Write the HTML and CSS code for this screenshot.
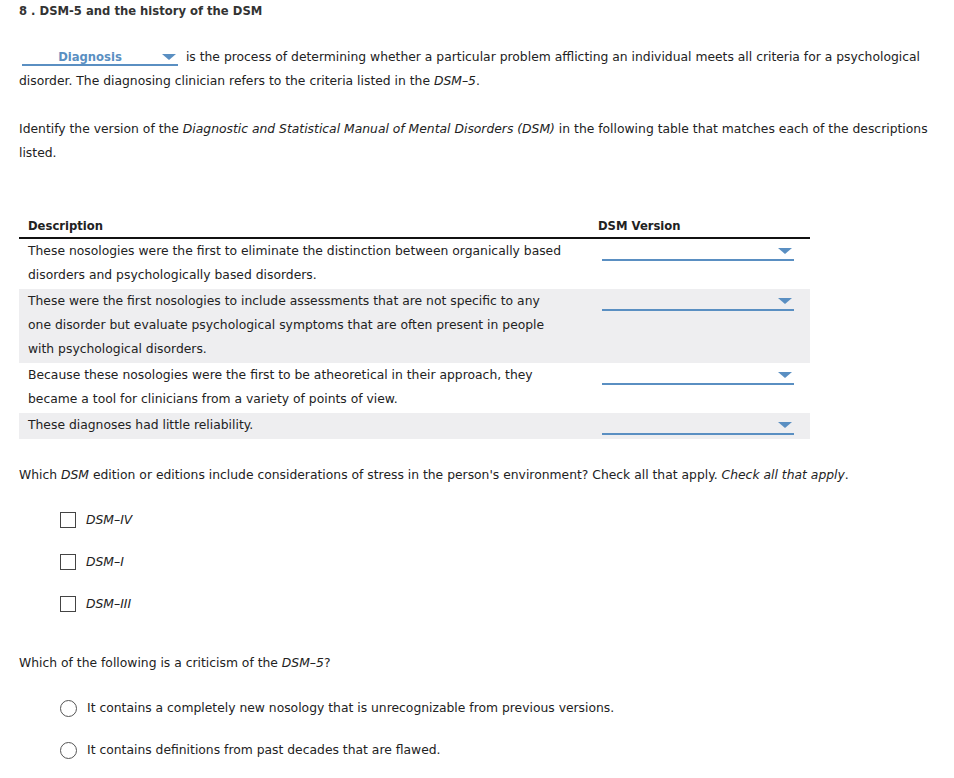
FILE: index.html
```html
<!DOCTYPE html>
<html lang="en">
<head>
  <meta charset="UTF-8">
  <title>DSM-5 and the history of the DSM</title>
  <link rel="stylesheet" href="styles.css">
</head>
<body>
  <div class="q-container">

    <h2 class="q-title">8 . DSM-5 and the history of the DSM</h2>

    <p class="q-text q-first">
      <span class="q-drop q-drop-inline"><span class="q-drop-value">Diagnosis</span><span class="q-caret"></span></span>
      is the process of determining whether a particular problem afflicting an individual meets all criteria for a psychological
      disorder. The diagnosing clinician refers to the criteria listed in the <i>DSM–5</i>.
    </p>

    <p class="q-text q-second">
      Identify the version of the <i>Diagnostic and Statistical Manual of Mental Disorders (DSM)</i> in the following table that matches each of the descriptions listed.
    </p>

    <table class="q-table">
      <thead>
        <tr>
          <th class="q-col-desc">Description</th>
          <th class="q-col-ver">DSM Version</th>
        </tr>
      </thead>
      <tbody>
        <tr>
          <td>These nosologies were the first to eliminate the distinction between organically based disorders and psychologically based disorders.</td>
          <td><span class="q-drop q-drop-cell"><span class="q-caret"></span></span></td>
        </tr>
        <tr class="q-alt">
          <td>These were the first nosologies to include assessments that are not specific to any one disorder but evaluate psychological symptoms that are often present in people with psychological disorders.</td>
          <td><span class="q-drop q-drop-cell"><span class="q-caret"></span></span></td>
        </tr>
        <tr>
          <td>Because these nosologies were the first to be atheoretical in their approach, they became a tool for clinicians from a variety of points of view.</td>
          <td><span class="q-drop q-drop-cell"><span class="q-caret"></span></span></td>
        </tr>
        <tr class="q-alt">
          <td>These diagnoses had little reliability.</td>
          <td><span class="q-drop q-drop-cell"><span class="q-caret"></span></span></td>
        </tr>
      </tbody>
    </table>

    <p class="q-text q-third">
      Which <i>DSM</i> edition or editions include considerations of stress in the person's environment? Check all that apply. <i>Check all that apply</i>.
    </p>

    <ul class="q-choices q-checks">
      <li><span class="q-box"></span><i>DSM–IV</i></li>
      <li><span class="q-box"></span><i>DSM–I</i></li>
      <li><span class="q-box"></span><i>DSM–III</i></li>
    </ul>

    <p class="q-text q-fourth">Which of the following is a criticism of the <i>DSM–5</i>?</p>

    <ul class="q-choices q-radios">
      <li><span class="q-radio"></span>It contains a completely new nosology that is unrecognizable from previous versions.</li>
      <li><span class="q-radio"></span>It contains definitions from past decades that are flawed.</li>
    </ul>

  </div>
</body>
</html>
```

FILE: styles.css
```css
body {
  margin: 0;
  color: #222;
  background: #fff;
  font-family: "DejaVu Sans", Verdana, sans-serif;
  font-size: 12.35px;
}

.q-container {
  width: 916px;
  padding: 3px 0 0 19px;
}

.q-title {
  margin: 0;
  font-size: 11.6px;
  line-height: 16px;
  font-weight: bold;
  color: #333;
}

.q-text {
  margin: 0;
  line-height: 24px;
}

.q-first {
  margin-top: 26px;
}

.q-second {
  margin-top: 24px;
}

.q-third {
  margin-top: 24px;
}

.q-fourth {
  margin-top: 38px;
}

/* dropdown selects, drawn as an underline with a caret */
.q-drop {
  position: relative;
  display: inline-block;
  box-sizing: border-box;
  border-bottom: 2px solid #5a8fc2;
  vertical-align: top;
}

.q-drop-inline {
  width: 156px;
  height: 21px;
  margin-left: 3px;
  margin-right: 4px;
  padding-right: 20px;
  text-align: center;
}

.q-drop-value {
  color: #5a8fc2;
  font-size: 11.6px;
  font-weight: bold;
  line-height: 22px;
}

.q-drop-inline .q-caret {
  top: 9px;
}

.q-drop-cell {
  width: 192px;
  height: 22px;
  margin-left: 30px;
}

.q-caret {
  position: absolute;
  right: 2px;
  top: 9px;
  width: 0;
  height: 0;
  border-left: 7px solid transparent;
  border-right: 7px solid transparent;
  border-top: 6px solid #5a8fc2;
}

/* description table */
.q-table {
  margin-top: 48px;
  width: 791px;
  border-collapse: collapse;
}

.q-table th {
  padding: 4px 9px 1px;
  text-align: left;
  font-size: 11.6px;
  font-weight: bold;
  line-height: 19px;
  border-bottom: 2px solid #111;
}

.q-table th.q-col-ver {
  padding-left: 26px;
}

.q-table td {
  padding: 0 9px 2px;
  line-height: 24px;
  vertical-align: top;
}

.q-table td:first-child {
  width: 535px;
}

.q-table td:last-child {
  padding-left: 0;
}

.q-alt {
  background: #eeeef0;
}

/* checkbox and radio lists */
.q-choices {
  list-style: none;
  margin: 0;
  padding: 0 0 0 41px;
}

.q-choices li {
  display: flex;
  align-items: center;
  gap: 10px;
  height: 18px;
}

.q-checks {
  margin-top: 24px;
}

.q-checks li + li {
  margin-top: 24px;
}

.q-radios {
  margin-top: 24px;
}

.q-radios li + li {
  margin-top: 24px;
}

.q-box {
  display: inline-block;
  box-sizing: border-box;
  width: 16px;
  height: 16px;
  border: 1px solid #444;
  background: #fff;
}

.q-radio {
  display: inline-block;
  box-sizing: border-box;
  width: 17px;
  height: 17px;
  border: 1.5px solid #555;
  border-radius: 50%;
  background: #fff;
}
```
